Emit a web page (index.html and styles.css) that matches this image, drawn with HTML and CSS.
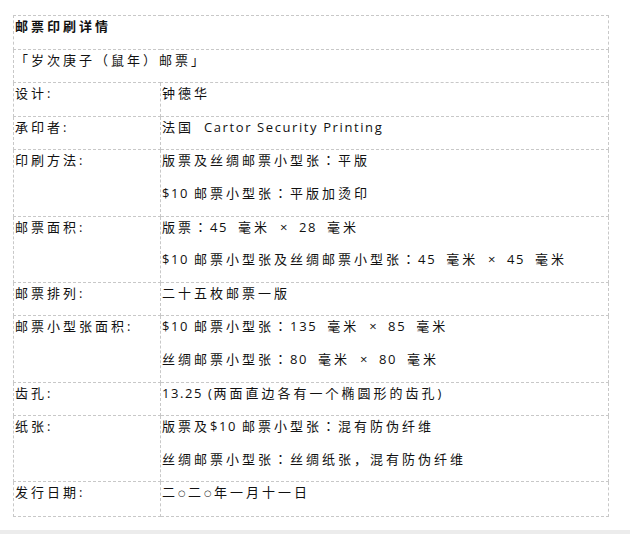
FILE: index.html
```html
<!DOCTYPE html>
<html lang="zh-CN">
<head>
<meta charset="utf-8">
<title>邮票印刷详情</title>
<link rel="stylesheet" href="styles.css">
</head>
<body>
<div class="page">
  <table class="detail">
    <colgroup><col class="c-label"><col class="c-value"></colgroup>
    <tr><th colspan="2" class="title"><div class="ln">邮票印刷详情</div></th></tr>
    <tr><td colspan="2"><div class="ln">「岁次庚子（鼠年）邮票」</div></td></tr>
    <tr><td><div class="ln">设计<span class="en">:</span></div></td><td><div class="ln">钟德华</div></td></tr>
    <tr><td><div class="ln">承印者<span class="en">:</span></div></td><td><div class="ln">法国<span class="en">&nbsp; Cartor Security Printing</span></div></td></tr>
    <tr><td><div class="ln">印刷方法<span class="en">:</span></div></td><td><div class="ln">版票及丝绸邮票小型张：平版</div><div class="ln"><span class="en">$10 </span>邮票小型张：平版加烫印</div></td></tr>
    <tr><td><div class="ln">邮票面积<span class="en">:</span></div></td><td><div class="ln">版票：<span class="en">45&nbsp; </span>毫米<span class="en">&nbsp; ×&nbsp; 28&nbsp; </span>毫米</div><div class="ln"><span class="en">$10 </span>邮票小型张及丝绸邮票小型张：<span class="en">45&nbsp; </span>毫米<span class="en">&nbsp; ×&nbsp; 45&nbsp; </span>毫米</div></td></tr>
    <tr><td><div class="ln">邮票排列<span class="en">:</span></div></td><td><div class="ln">二十五枚邮票一版</div></td></tr>
    <tr><td><div class="ln">邮票小型张面积<span class="en">:</span></div></td><td><div class="ln"><span class="en">$10 </span>邮票小型张：<span class="en">135&nbsp; </span>毫米<span class="en">&nbsp; ×&nbsp; 85&nbsp; </span>毫米</div><div class="ln">丝绸邮票小型张：<span class="en">80&nbsp; </span>毫米<span class="en">&nbsp; ×&nbsp; 80&nbsp; </span>毫米</div></td></tr>
    <tr><td><div class="ln">齿孔<span class="en">:</span></div></td><td><div class="ln"><span class="en">13.25 (</span>两面直边各有一个椭圆形的齿孔<span class="en">)</span></div></td></tr>
    <tr><td><div class="ln">纸张<span class="en">:</span></div></td><td><div class="ln">版票及<span class="en">$10 </span>邮票小型张：混有防伪纤维</div><div class="ln">丝绸邮票小型张：丝绸纸张，混有防伪纤维</div></td></tr>
    <tr><td><div class="ln">发行日期<span class="en">:</span></div></td><td><div class="ln">二<span class="ring">○</span>二<span class="ring">○</span>年一月十一日</div></td></tr>
  </table>
  <div class="bottombar"></div>
</div>
</body>
</html>
```
FILE: styles.css
```css
html, body {
  margin: 0;
  padding: 0;
  background: #fff;
}
body {
  font-family: "Open Sans", "Noto Sans CJK JP", sans-serif;
  font-size: 13px;
  color: #111;
  font-feature-settings: "locl" 0;
  overflow: hidden;
}
.page {
  padding: 15px 0 0 13px;
}
.detail {
  width: 596px;
  border-collapse: collapse;
  table-layout: fixed;
}
.c-label { width: 147px; }
.detail th,
.detail td {
  border: 1px dashed #c8c8c8;
  padding: 0 1px;
  vertical-align: top;
  text-align: left;
}
.title { font-weight: bold; }
.ln {
  line-height: 20px;
  margin-bottom: 12.6px;
  letter-spacing: 3px;
  white-space: nowrap;
}
.en {
  letter-spacing: 1.6px;
}
.ring {
  font-family: "DejaVu Sans", sans-serif;
  font-size: 8.5px;
  letter-spacing: 2.6px;
  vertical-align: 1px;
}
.bottombar {
  margin-top: 13px;
  margin-left: -13px;
  height: 4px;
  background: #ececec;
}
```
